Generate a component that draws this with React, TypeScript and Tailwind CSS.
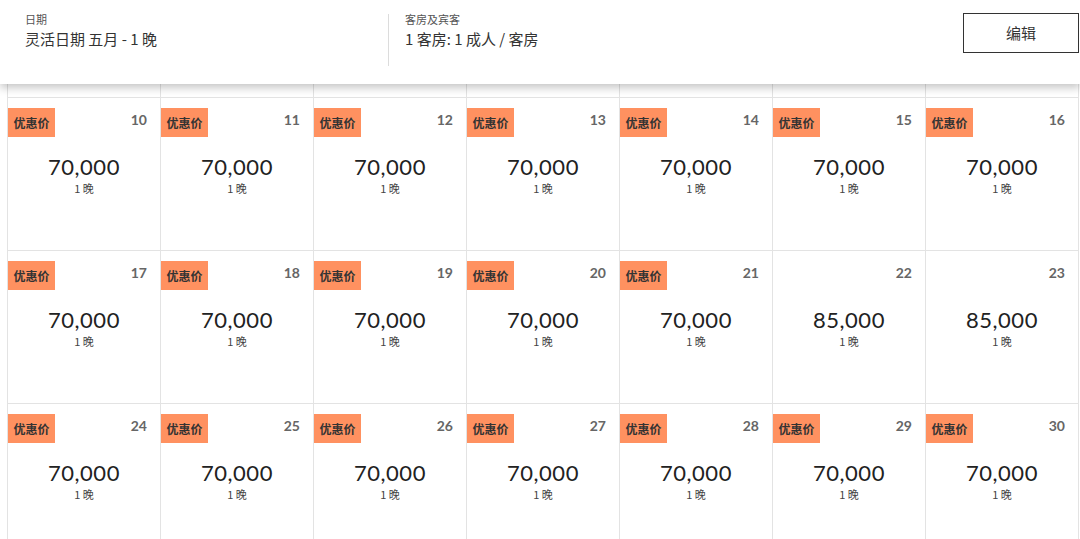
import React from 'react';

type Day = { day: number; price: string; promo: boolean };

// Three visible weeks of May — 22 & 23 are regular rate, the rest promo
const WEEKS: Day[][] = [
  [10, 11, 12, 13, 14, 15, 16],
  [17, 18, 19, 20, 21, 22, 23],
  [24, 25, 26, 27, 28, 29, 30],
].map((week) =>
  week.map((d) => {
    const promo = d !== 22 && d !== 23;
    return { day: d, promo, price: promo ? '70,000' : '85,000' };
  })
);

const FONT = { fontFamily: 'Lato, "Noto Sans CJK SC", sans-serif' };
const CJK = { fontFamily: '"Noto Sans CJK SC", "Noto Sans", sans-serif' };

function DayCell({ d }: { d: Day }) {
  return (
    <div className="relative h-[153px] border-l border-t border-[#e3e3e3] bg-white">
      <div className="flex items-start justify-between h-[40px]">
        {d.promo ? (
          <div
            className="mt-[10px] w-[47px] h-[29px] bg-[#ff9160] flex items-center justify-center text-[12px] font-bold text-[#333]"
            style={CJK}
          >
            优惠价
          </div>
        ) : (
          <div />
        )}
        <div className="mt-[12px] mr-[13px] text-[14px] font-bold text-[#666] leading-[20px]" style={FONT}>
          {d.day}
        </div>
      </div>
      <div className="flex flex-col items-center mt-[16px]">
        <div className="text-[22px] leading-[26px] text-[#222] tracking-[0.5px]" style={FONT}>
          {d.price}
        </div>
        <div className="text-[11px] leading-[14px] text-[#444] mt-[1px]" style={CJK}>
          1 晚
        </div>
      </div>
    </div>
  );
}

export default function App() {
  return (
    <div className="w-[1080px] h-[539px] overflow-hidden bg-white" style={CJK}>
      {/* Search summary bar */}
      <div className="relative z-10 h-[84px] bg-white shadow-[0_4px_8px_rgba(0,0,0,0.22)] flex items-start">
        <div className="w-[388px] pl-[25px] pt-[11px]">
          <div className="text-[11px] leading-[16px] text-[#555]">日期</div>
          <div className="text-[15px] leading-[24px] text-[#333]">灵活日期 五月 - 1 晚</div>
        </div>
        <div className="w-px h-[52px] mt-[14px] bg-[#dcdcdc]" />
        <div className="flex-1 pl-[16px] pt-[11px]">
          <div className="text-[11px] leading-[16px] text-[#555]">客房及宾客</div>
          <div className="text-[15px] leading-[24px] text-[#333]">1 客房: 1 成人 / 客房</div>
        </div>
        <button className="mt-[13px] mr-[1px] w-[116px] h-[40px] border-[1.5px] border-[#333] bg-white text-[15px] text-[#333]">
          编辑
        </button>
      </div>

      {/* Calendar */}
      <div className="ml-[7px] w-[1072px] border-r border-[#e3e3e3]">
        <div className="grid grid-cols-[repeat(7,153px)]">
          {Array.from({ length: 7 }, (_, i) => (
            <div key={i} className="h-[13px] border-l border-[#e3e3e3]" />
          ))}
        </div>
        {WEEKS.map((week, i) => (
          <div key={i} className="grid grid-cols-[repeat(7,153px)]">
            {week.map((d) => (
              <DayCell key={d.day} d={d} />
            ))}
          </div>
        ))}
      </div>
    </div>
  );
}
